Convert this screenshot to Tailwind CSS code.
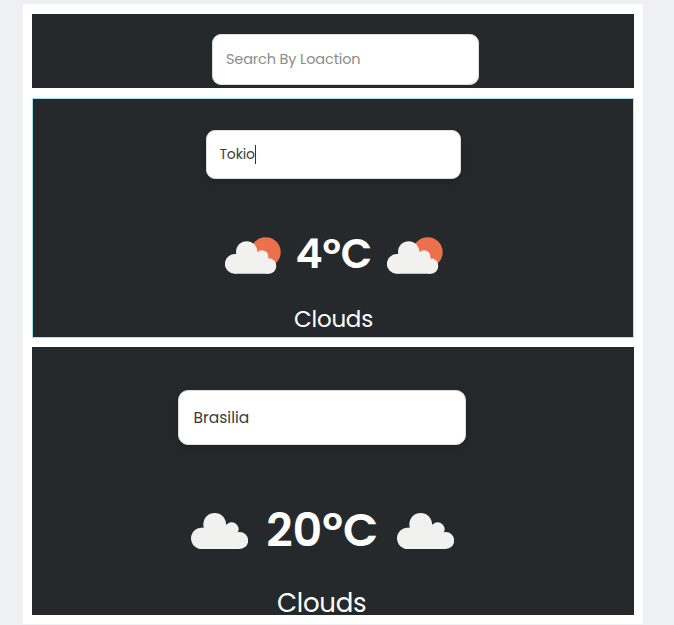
<!DOCTYPE html>
<html lang="en">
<head>
<meta charset="utf-8">
<title>Weather</title>
<script src="https://cdn.jsdelivr.net/npm/@tailwindcss/browser@4"></script>
</head>
<body class="bg-[#eff0f3] h-[625px] overflow-hidden font-[Poppins,Inter,sans-serif]">
<svg class="hidden">
  <symbol id="cloud" viewBox="31 40 171 108">
    <g fill="#f1f1ef"><circle cx="63" cy="116" r="32"/><circle cx="102" cy="74" r="34"/><circle cx="153" cy="89" r="21"/><circle cx="177" cy="122.500" r="25.500"/><path d="M63 84H68L136 74L153 89L177 110V148H63Z"/></g>
  </symbol>
  <symbol id="suncloud" viewBox="30 36 168 110">
    <circle cx="152" cy="81" r="45" fill="#ed704d"/>
    <g fill="#f1f1ef"><circle cx="59" cy="116" r="29.500"/><circle cx="95" cy="80" r="32"/><circle cx="141" cy="94" r="19"/><circle cx="161" cy="122.500" r="23"/><path d="M59 87H64L126 82L141 94L161 110V145.500H59Z"/></g>
  </symbol>
</svg>
<main class="ml-[23px] mt-[4px] w-[620px] h-[620px] bg-white pt-[9.5px] pl-[9px] flex flex-col gap-[9.500px]">
  <section class="w-[601.5px] h-[74.5px] bg-[#25292c] pt-[20.500px] pl-[180px] shrink-0">
    <div class="w-[266.5px] h-[51px] rounded-[9px] bg-white border border-[#ddd] flex items-center pl-[13px] text-[14.5px] text-[#8b8b8b]"><span class="tracking-[-0.15px]">Search By Loaction</span></div>
  </section>
  <section class="w-[601.5px] h-[240px] bg-[#25292c] border border-[#a8e0ec] pt-[31.500px] shrink-0">
    <div class="ml-[173px] w-[254.5px] h-[48.5px] rounded-[9px] bg-white border border-[#ddd] shadow-[0_4px_10px_rgba(0,0,0,0.15)] flex items-center pl-[12.5px] text-[14px] text-[#3c3c3c]"><span class="tracking-[-0.2px]">Tokio</span><i class="w-px h-[19px] bg-[#333]"></i></div>
    <div class="mt-[58px] ml-[192px] h-[37px] flex items-center">
      <svg class="w-[56px] h-[37px]"><use href="#suncloud"/></svg>
      <div class="w-[105.5px] pb-[3px] text-center text-[41px] leading-[37px] tracking-[-0.2px] font-semibold text-white whitespace-nowrap">4ºC</div>
      <svg class="w-[56px] h-[37px]"><use href="#suncloud"/></svg>
    </div>
    <div class="mt-[29px] ml-[261px] text-[23px] leading-[32px] tracking-[-0.25px] text-white">Clouds</div>
  </section>
  <section class="w-[601.5px] h-[268px] bg-[#25292c] pt-[43px] shrink-0">
    <div class="ml-[146px] w-[287.5px] h-[54.5px] rounded-[10px] bg-white border border-[#ddd] shadow-[0_4px_10px_rgba(0,0,0,0.15)] flex items-center pl-[14.5px] text-[15.5px] text-[#3c3c3c]"><span>Brasilia</span></div>
    <div class="mt-[68.5px] ml-[158.500px] h-[36px] flex items-center">
      <svg class="w-[57px] h-[36px]"><use href="#cloud"/></svg>
      <div class="w-[149.5px] pb-[2px] text-center text-[46px] leading-[36px] font-semibold text-white whitespace-nowrap">20ºC</div>
      <svg class="w-[57px] h-[36px]"><use href="#cloud"/></svg>
    </div>
    <div class="mt-[38px] ml-[245px] text-[26px] leading-[32px] tracking-[-0.25px] text-white">Clouds</div>
  </section>
</main>
</body>
</html>
